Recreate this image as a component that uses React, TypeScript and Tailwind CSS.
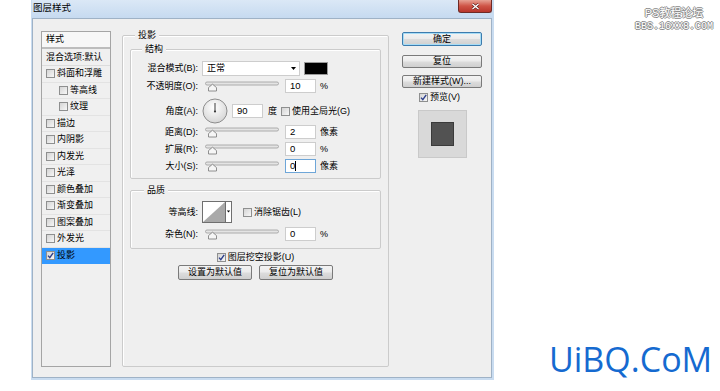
import React from 'react';

const ui = "font-['Liberation_Sans','Noto_Sans_CJK_SC',sans-serif]";

function Check({ checked }: { checked?: boolean }) {
  return (
    <span className="w-[9px] h-[9px] shrink-0 border border-[#8e8f8f] bg-[linear-gradient(135deg,#d4d4d4,#f7f7f7)] flex items-center justify-center">
      {checked && (
        <svg width="7" height="7" viewBox="0 0 7 7">
          <path d="M1 3.6 L2.8 5.6 L6.2 0.8" stroke="#2d3f8c" strokeWidth="1.4" fill="none" />
        </svg>
      )}
    </span>
  );
}

function Slider() {
  return (
    <svg width="78" height="12" viewBox="0 0 78 12" className="shrink-0">
      <rect x="3.5" y="2" width="73" height="3" rx="1.5" fill="#e4e4e4" stroke="#9c9c9c" strokeWidth="0.8" />
      <path d="M6.5 11 V7.6 L10.5 4.2 L14.5 7.6 V11 Z" fill="#f6f6f6" stroke="#777" strokeWidth="0.8" />
    </svg>
  );
}

function Field({ value, focus }: { value: string; focus?: boolean }) {
  return (
    <div
      className={`w-[31px] h-[14px] shrink-0 bg-white border ${
        focus ? 'border-[#6ea6d8]' : 'border-[#cdcdcd]'
      } text-[9.5px] leading-[12px] pl-[4px] flex items-center`}
    >
      {value}
      {focus && <span className="w-px h-[10px] bg-black" />}
    </div>
  );
}

function Label({ children }: { children: React.ReactNode }) {
  return <span className="w-[68px] shrink-0 text-right pr-[1px]">{children}</span>;
}

function SliderRow({ label, value, unit, focus, className }: { label: string; value: string; unit: string; focus?: boolean; className: string }) {
  return (
    <div className={`h-[14px] flex items-center ${className}`}>
      <Label>{label}</Label>
      <span className="ml-[3px]">
        <Slider />
      </span>
      <span className="ml-[5px]">
        <Field value={value} focus={focus} />
      </span>
      <span className="ml-[4px]">{unit}</span>
    </div>
  );
}

function Btn({ children, focus, className }: { children: React.ReactNode; focus?: boolean; className: string }) {
  return (
    <button
      className={`flex items-center justify-center rounded-[2px] border ${
        focus ? 'border-[#3c7cae] shadow-[inset_0_0_0_1px_#a6dcf6]' : 'border-[#7a7a7a]'
      } bg-[linear-gradient(#f3f3f3_0%,#ebebeb_48%,#dddddd_52%,#cfcfcf_100%)] text-[9px] leading-none text-black ${className}`}
    >
      {children}
    </button>
  );
}

const styles = [
  { t: '斜面和浮雕' },
  { t: '等高线', indent: true },
  { t: '纹理', indent: true },
  { t: '描边' },
  { t: '内阴影' },
  { t: '内发光' },
  { t: '光泽' },
  { t: '颜色叠加' },
  { t: '渐变叠加' },
  { t: '图案叠加' },
  { t: '外发光' },
  { t: '投影', on: true },
];

export default function App() {
  return (
    <div className={`relative w-[720px] h-[391px] bg-white overflow-hidden text-black ${ui}`}>
      {/* dialog window */}
      <div className="ml-[31px] w-[463px] h-[380px] flex flex-col bg-[#c9dcf0] pl-[1px] pr-[2px] pb-[2px]">
        <div className="h-[18px] shrink-0 flex items-start justify-between bg-[linear-gradient(#dbe8f6,#c6daf0)]">
          <span className="text-[9.5px] leading-none pt-[3px] pl-[1px]">图层样式</span>
          <div className="w-[34px] h-[13px] rounded-b-[3px] border border-t-0 border-[#6e2a25] bg-[linear-gradient(#e7a294,#cf5446_50%,#b8352b)] flex items-center justify-center">
            <svg width="9" height="7" viewBox="0 0 9 7">
              <path d="M1.5 1 L7.5 6 M7.5 1 L1.5 6" stroke="#5a1a16" strokeWidth="2.6" />
              <path d="M1.5 1 L7.5 6 M7.5 1 L1.5 6" stroke="#ffffff" strokeWidth="1.4" />
            </svg>
          </div>
        </div>

        <div className="flex-1 flex bg-[#efefef] border border-[#9fb2c6] pt-[10px] pl-[8px] pb-[10px] text-[9px] leading-none">
          {/* left style list */}
          <div className="mt-[2px] w-[70px] border border-[#a5a5a5] bg-[#f0f0f0] flex flex-col">
            <div className="h-[17px] shrink-0 pl-[4px] flex items-center bg-[#f7f7f7] border-b-2 border-[#bdbdbd]">样式</div>
            <div className="h-[17px] shrink-0 pl-[4px] flex items-center border-b border-[#dcdcdc]">混合选项:默认</div>
            {styles.map((s) => (
              <div
                key={s.t}
                className={`h-[16.5px] shrink-0 flex items-center gap-[2px] border-b ${
                  s.on ? 'bg-[#3399ff] border-[#3399ff]' : 'border-[#e3e3e3]'
                } ${s.indent ? 'pl-[17px]' : 'pl-[4px]'}`}
              >
                <Check checked={s.on} />
                <span>{s.t}</span>
              </div>
            ))}
          </div>

          {/* main group */}
          <fieldset className="ml-[11px] w-[267px] border border-[#cbcbcb] rounded-[2px] px-[7px] shadow-[inset_1px_1px_0_#ffffff] flex flex-col">
            <legend className="ml-[5px] px-[3px] leading-[12px] bg-[#efefef]">投影</legend>

            <fieldset className="mt-[2px] border border-[#cbcbcb] rounded-[2px] shadow-[inset_1px_1px_0_#ffffff] pt-[6px] pb-[5px]">
              <legend className="ml-[11px] px-[3px] leading-[12px] bg-[#efefef]">结构</legend>
              <div className="h-[15px] flex items-center">
                <Label>混合模式(B):</Label>
                <div className="ml-[3px] w-[98px] h-[15px] bg-white border border-[#cdcdcd] flex items-center justify-between pl-[4px] pr-[3px]">
                  <span>正常</span>
                  <svg width="5" height="3" viewBox="0 0 5 3">
                    <path d="M0 0 H5 L2.5 3 Z" fill="#000" />
                  </svg>
                </div>
                <div className="ml-[4px] w-[24px] h-[13px] bg-black border border-[#9a9a9a]" />
              </div>
              <SliderRow className="mt-[3px]" label="不透明度(O):" value="10" unit="%" />
              <div className="mt-[5px] h-[26px] flex items-center">
                <Label>角度(A):</Label>
                <svg width="26" height="26" viewBox="0 0 26 26" className="ml-[3px] shrink-0">
                  <defs>
                    <radialGradient id="dial" cx="45%" cy="35%" r="70%">
                      <stop offset="0" stopColor="#ffffff" />
                      <stop offset="1" stopColor="#d3d3d3" />
                    </radialGradient>
                  </defs>
                  <circle cx="13" cy="13" r="12" fill="url(#dial)" stroke="#8d8d8d" />
                  <line x1="13" y1="13.5" x2="13" y2="5" stroke="#3a3a3a" strokeWidth="1" />
                  <circle cx="13" cy="13.5" r="1.1" fill="#3a3a3a" />
                </svg>
                <span className="ml-[4px]">
                  <Field value="90" />
                </span>
                <span className="ml-[5px]">度</span>
                <span className="ml-[4px] flex items-center gap-[2px]">
                  <Check />
                  <span>使用全局光(G)</span>
                </span>
              </div>
              <SliderRow className="mt-[1px]" label="距离(D):" value="2" unit="像素" />
              <SliderRow className="mt-[3px]" label="扩展(R):" value="0" unit="%" />
              <SliderRow className="mt-[3px]" label="大小(S):" value="0" unit="像素" focus />
            </fieldset>

            <fieldset className="mt-[5px] border border-[#cbcbcb] rounded-[2px] shadow-[inset_1px_1px_0_#ffffff] pt-[5px] pb-[7px]">
              <legend className="ml-[13px] px-[3px] leading-[12px] bg-[#efefef]">品质</legend>
              <div className="h-[22px] flex items-center">
                <Label>等高线:</Label>
                <svg width="30" height="22" viewBox="0 0 30 22" className="ml-[3px] shrink-0">
                  <rect x="0.5" y="0.5" width="29" height="21" fill="#ffffff" stroke="#6f6f6f" />
                  <path d="M1 21 L23 1 L23 21 Z" fill="#a9a9a9" />
                  <line x1="23.5" y1="0.5" x2="23.5" y2="21.5" stroke="#6f6f6f" />
                  <path d="M24.8 9.5 H28.2 L26.5 11.5 Z" fill="#000" />
                </svg>
                <span className="ml-[11px] flex items-center gap-[2px]">
                  <Check />
                  <span>消除锯齿(L)</span>
                </span>
              </div>
              <SliderRow className="mt-[4px]" label="杂色(N):" value="0" unit="%" />
            </fieldset>

            <div className="mt-[2px] h-[12px] flex items-center justify-center gap-[2px]">
              <Check checked />
              <span>图层挖空投影(U)</span>
            </div>
            <div className="mt-[2px] flex justify-center gap-[7px]">
              <Btn className="w-[74px] h-[15px]">设置为默认值</Btn>
              <Btn className="w-[74px] h-[15px]">复位为默认值</Btn>
            </div>
          </fieldset>

          {/* right column */}
          <div className="ml-[13px] mt-[3px] w-[80px] flex flex-col self-start">
            <Btn focus className="h-[14px]">确定</Btn>
            <Btn className="mt-[9px] h-[13px]">复位</Btn>
            <Btn className="mt-[7px] h-[13px]">新建样式(W)...</Btn>
            <div className="mt-[3px] h-[12px] pl-[17px] flex items-center gap-[2px]">
              <Check checked />
              <span>预览(V)</span>
            </div>
            <div className="mt-[7px] ml-[16px] w-[49px] h-[48px] bg-[#d9d9d9] border border-[#c9c9c9] flex items-center justify-center">
              <div className="w-[23px] h-[24px] bg-[#525252] border border-[#3a3a3a]" />
            </div>
          </div>
        </div>
      </div>

      {/* watermarks */}
      <div className="absolute right-[7px] top-[8px] flex flex-col items-center leading-none text-white [text-shadow:1px_0_#8a8a8a,-1px_0_#8a8a8a,0_1px_#8a8a8a,0_-1px_#8a8a8a]">
        <span className="text-[11px]">PS教程论坛</span>
        <span className="mt-[3px] text-[10px] font-['Liberation_Mono',monospace]">BBS.16XX8.COM</span>
      </div>
      <div className="absolute left-[549px] top-[342px] text-[34px] leading-none text-[#156ad0] font-['Open_Sans',sans-serif]">
        UiBQ.CoM
      </div>
    </div>
  );
}
